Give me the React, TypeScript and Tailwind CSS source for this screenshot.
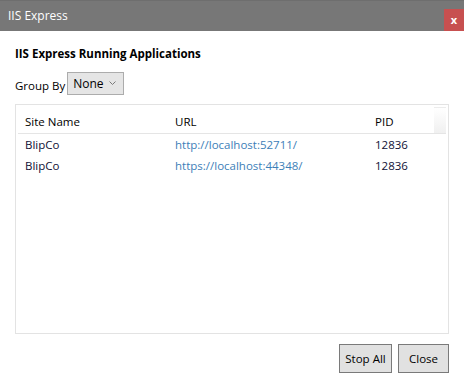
const rows = [
  { site: 'BlipCo', url: 'http://localhost:52711/', pid: '12836' },
  { site: 'BlipCo', url: 'https://localhost:44348/', pid: '12836' },
]

export default function App() {
  return (
    <div className="flex h-[381px] w-[464px] flex-col bg-white font-['Open_Sans',sans-serif] text-[11.5px] text-black">
      {/* title bar */}
      <div className="flex h-[31px] items-start justify-between bg-[#777777] border-t border-[#6e6e6e]">
        <span className="pl-[8px] pt-[6px] text-[12px] text-white">IIS Express</span>
        <button
          type="button"
          className="mt-[8px] flex h-[22px] w-[20px] items-center justify-center bg-[#c75050] text-[11px] font-bold text-white"
        >
          x
        </button>
      </div>

      <div className="flex flex-1 flex-col px-[15px]">
        <h1 className="mt-[14px] text-[11.5px] font-bold leading-[18px]">IIS Express Running Applications</h1>

        <div className="mt-[9px] flex items-end gap-[2px]">
          <span className="leading-[18px]">Group By</span>
          <div className="flex h-[23px] w-[57px] items-center justify-between border border-[#acacac] bg-[#e5e5e5] pl-[5px] pr-[7px]">
            <span className="text-[12px]">None</span>
            <svg width="7" height="4" viewBox="0 0 7 4" className="mt-[-2px]">
              <path d="M0.5 0.5 L3.5 3.5 L6.5 0.5" fill="none" stroke="#7a7a7a" strokeWidth="1" />
            </svg>
          </div>
        </div>

        {/* list */}
        <div className="mt-[9px] flex h-[230px] flex-col border border-[#e3e3e3]">
          <div className="mx-[2px] flex h-[29px] items-stretch border-b border-[#e5e5e5]">
            <div className="flex flex-1 items-center pl-[7px] pt-[5px]">
              <span className="w-[150px]">Site Name</span>
              <span className="w-[200px]">URL</span>
              <span>PID</span>
            </div>
            <div className="mt-[2px] w-[12px] bg-gradient-to-b from-white to-[#f0f0f0] border-t border-[#ececec]" />
          </div>
          {rows.map((r) => (
            <div key={r.url} className="flex h-[21px] items-center pl-[9px] first:mt-[3px]">
              <span className="w-[150px] text-[#101035]">{r.site}</span>
              <span className="w-[200px] text-[#3d80b8]">{r.url}</span>
              <span className="text-[#101035]">{r.pid}</span>
            </div>
          ))}
        </div>

        <div className="mt-[10px] flex justify-end gap-[6px]">
          <button type="button" className="h-[29px] w-[53px] border border-[#7a7a7a] bg-[#e1e1e1] text-[11.5px]">
            Stop All
          </button>
          <button type="button" className="h-[29px] w-[51px] border border-[#7a7a7a] bg-[#e1e1e1] text-[11.5px]">
            Close
          </button>
        </div>
      </div>
    </div>
  )
}
